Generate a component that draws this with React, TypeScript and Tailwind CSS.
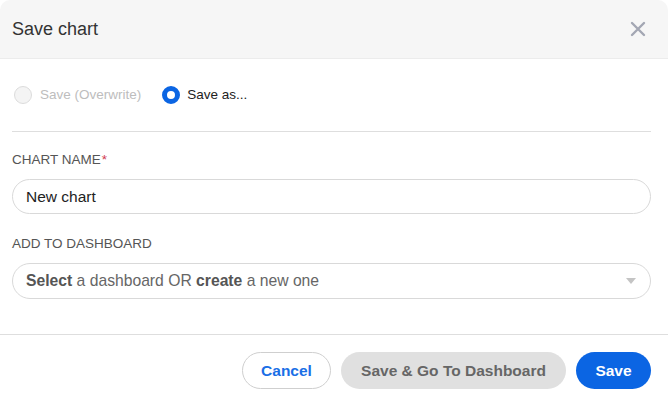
import { useState } from 'react'

function Radio({ checked, disabled }: { checked?: boolean; disabled?: boolean }) {
  if (checked) {
    return <span className="w-[18px] h-[18px] rounded-full border-[5px] border-[#0b65e3] bg-white shrink-0" />
  }
  return (
    <span
      className={
        'w-[18px] h-[18px] rounded-full border-[1.5px] shrink-0 ' +
        (disabled ? 'border-[#dcdcdc] bg-[#f4f4f4]' : 'border-[#999] bg-white')
      }
    />
  )
}

export default function App() {
  const [name, setName] = useState('New chart')

  return (
    <div className="w-[668px] h-[402px] bg-white overflow-hidden font-['Liberation_Sans',Arial,sans-serif]">
      <div className="rounded-t-[10px] bg-white h-full flex flex-col">
        {/* Header */}
        <div className="h-[59px] shrink-0 bg-[#f6f6f6] border-b border-[#ececec] rounded-t-[10px] flex items-center justify-between pl-3 pr-[22px]">
          <h2 className="text-[18px] text-[#333]">Save chart</h2>
          <svg width="16" height="16" viewBox="0 0 16 16" className="text-[#a3a7b3]">
            <path d="M2 2 L14 14 M14 2 L2 14" stroke="currentColor" strokeWidth="2.4" strokeLinecap="round" />
          </svg>
        </div>

        {/* Body */}
        <div className="pl-3 pr-[17px] pt-[27px]">
          <div className="flex items-center h-[18px]">
            <label className="flex items-center gap-[8px] ml-[2px]">
              <Radio disabled />
              <span className="text-[13.5px] text-[#bdbdbd]">Save (Overwrite)</span>
            </label>
            <label className="flex items-center gap-[7px] ml-[21px]">
              <Radio checked />
              <span className="text-[13.5px] text-[#222]">Save as...</span>
            </label>
          </div>

          <div className="mt-[27px] border-t border-[#dedede]" />

          <div className="mt-[20px] text-[13.5px] text-[#555] leading-[16px]">
            CHART NAME<span className="text-[#d0394f] ml-[1px]">*</span>
          </div>
          <input
            value={name}
            onChange={e => setName(e.target.value)}
            className="mt-[11px] w-full h-[35px] rounded-full border border-[#d9d9d9] px-[13px] text-[15.5px] text-[#222] outline-none"
          />

          <div className="mt-[22px] text-[13.5px] text-[#555] leading-[16px]">ADD TO DASHBOARD</div>
          <div className="mt-[11px] h-[36px] rounded-full border border-[#d9d9d9] flex items-center justify-between pl-[13px] pr-[14px]">
            <span className="text-[15.7px] text-[#666]">
              <b className="text-[#555]">Select</b> a dashboard OR <b className="text-[#555]">create</b> a new one
            </span>
            <svg width="10" height="6" viewBox="0 0 10 6">
              <path d="M0 0 H10 L5 6 Z" fill="#c4c4c4" />
            </svg>
          </div>
        </div>

        {/* Footer */}
        <div className="mt-[35px] border-t border-[#dedede] flex justify-end gap-[10px] pt-[17px] pr-[17px]">
          <button className="h-[37px] w-[89px] rounded-full border border-[#cfcfcf] bg-white text-[15.5px] font-bold text-[#1a6fe6]">
            Cancel
          </button>
          <button className="h-[37px] w-[225px] rounded-full bg-[#e0e0e0] text-[15.5px] font-bold text-[#666]">
            Save &amp; Go To Dashboard
          </button>
          <button className="h-[37px] w-[75px] rounded-full bg-[#0b65e3] text-[15.5px] font-bold text-white">
            Save
          </button>
        </div>
      </div>
    </div>
  )
}
